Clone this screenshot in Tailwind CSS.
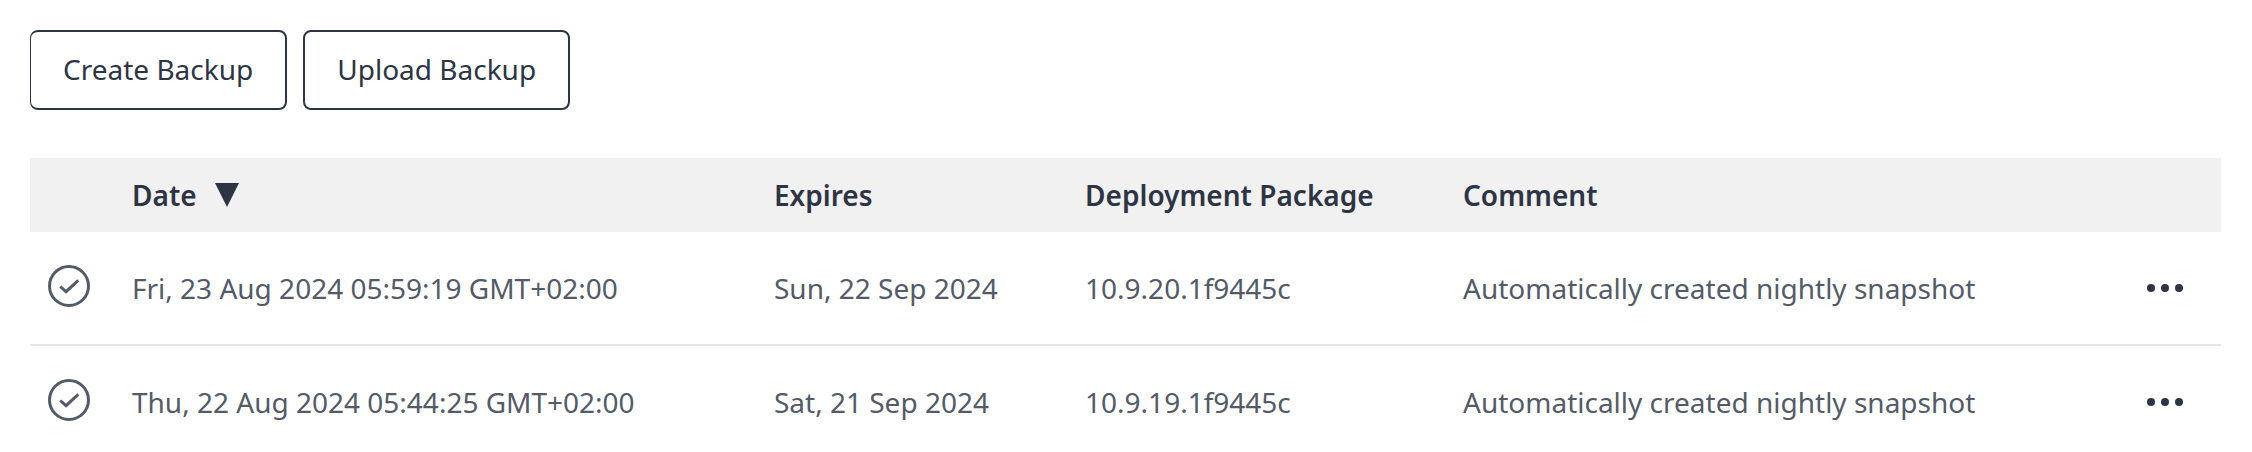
<!DOCTYPE html>
<html lang="en">
<head>
<meta charset="utf-8">
<meta name="viewport" content="width=device-width, initial-scale=1">
<title>Backups</title>
<script src="https://cdn.jsdelivr.net/npm/@tailwindcss/browser@4"></script>
</head>
<body class="bg-white font-['Noto_Sans',sans-serif] text-[28px] leading-[38px] text-[#535b69]">
<svg class="hidden" aria-hidden="true">
  <symbol id="check" viewBox="0 0 42 42"><g fill="none" stroke="currentColor"><circle cx="21" cy="21" r="19.5" stroke-width="3"/><path d="M12.3 21.5l5.7 5.2L30.3 15.3" stroke-width="3"/></g></symbol>
  <symbol id="dots" viewBox="0 0 36 8"><g fill="currentColor"><circle cx="4" cy="4" r="4"/><circle cx="18" cy="4" r="4"/><circle cx="32" cy="4" r="4"/></g></symbol>
</svg>
<main class="h-screen overflow-hidden pl-[30px] pr-[31px] pt-[30px]">
  <div class="flex gap-4 text-[#2d3545]">
    <button type="button" class="h-20 rounded-lg border-2 border-l border-[#2d3545] px-8 pb-0.5">Create Backup</button>
    <button type="button" class="h-20 rounded-lg border-2 border-[#2d3545] px-8 pb-0.5">Upload Backup</button>
  </div>
  <table class="mt-12 w-full table-fixed border-separate border-spacing-0 text-left">
    <colgroup>
      <col class="w-[86px]"><col class="w-[29.3%]"><col class="w-[14.2%]"><col class="w-[17.25%]"><col><col class="w-[120px]">
    </colgroup>
    <thead class="bg-[#f1f1f1] text-[#2d3545]">
      <tr class="h-[74px]">
        <th scope="col" aria-label="Status"></th>
        <th scope="col" class="px-4 font-semibold" aria-sort="descending">
          <button type="button" class="flex items-center gap-[18px]">Date
            <svg class="h-6 w-6" viewBox="0 0 24 24" aria-hidden="true"><path fill="currentColor" d="M0 0h24L12 24z"/></svg>
          </button>
        </th>
        <th scope="col" class="px-4 font-semibold">Expires</th>
        <th scope="col" class="px-4 font-semibold">Deployment Package</th>
        <th scope="col" class="px-4 font-semibold">Comment</th>
        <th scope="col" aria-label="Actions"></th>
      </tr>
    </thead>
    <tbody class="[&_td]:border-b-2 [&_td]:border-[#e5e5e5]">
      <tr class="h-[114px]">
        <td class="pb-1 pl-[18px]"><svg class="h-[42px] w-[42px]" role="img" aria-label="Completed"><use href="#check"/></svg></td>
        <td class="px-4">Fri, 23 Aug 2024 05:59:19 GMT+02:00</td>
        <td class="px-4">Sun, 22 Sep 2024</td>
        <td class="px-4">10.9.20.1f9445c</td>
        <td class="px-4">Automatically created nightly snapshot</td>
        <td class="pr-[38px] text-[#2d3545]"><button type="button" class="ml-auto block py-4" aria-label="More actions"><svg class="h-2 w-9"><use href="#dots"/></svg></button></td>
      </tr>
      <tr class="h-[114px]">
        <td class="pb-1 pl-[18px]"><svg class="h-[42px] w-[42px]" role="img" aria-label="Completed"><use href="#check"/></svg></td>
        <td class="px-4">Thu, 22 Aug 2024 05:44:25 GMT+02:00</td>
        <td class="px-4">Sat, 21 Sep 2024</td>
        <td class="px-4">10.9.19.1f9445c</td>
        <td class="px-4">Automatically created nightly snapshot</td>
        <td class="pr-[38px] text-[#2d3545]"><button type="button" class="ml-auto block py-4" aria-label="More actions"><svg class="h-2 w-9"><use href="#dots"/></svg></button></td>
      </tr>
    </tbody>
  </table>
</main>
</body>
</html>
